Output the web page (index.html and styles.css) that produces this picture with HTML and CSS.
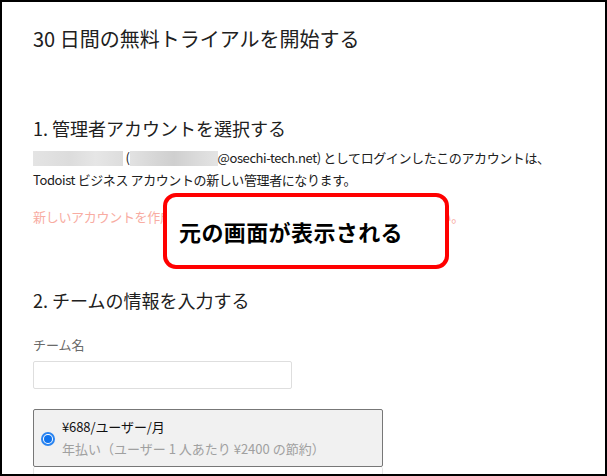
FILE: index.html
```html
<!DOCTYPE html>
<html lang="ja">
<head>
<meta charset="utf-8">
<title>30 日間の無料トライアルを開始する</title>
<link rel="stylesheet" href="styles.css">
</head>
<body>
<div class="frame">
  <div class="content">
    <h1 class="title">30 日間の無料トライアルを開始する</h1>

    <h2 class="section-title section-one">1. 管理者アカウントを選択する</h2>
    <p class="account-text">
      <span class="blur blur-name"></span> (<span class="blur blur-mail"></span>@osechi-tech.net) としてログインしたこのアカウントは、<br>
      Todoist ビジネス アカウントの新しい管理者になります。
    </p>
    <p class="notice">新しいアカウントを作成したい場合は、いったんログアウトしてください。</p>

    <h2 class="section-title section-two">2. チームの情報を入力する</h2>
    <label class="field-label" for="team">チーム名</label>
    <input class="text-input" id="team" type="text">

    <div class="plans">
      <label class="plan plan-selected">
        <span class="radio"><span class="radio-dot"></span></span>
        <span class="plan-text">
          <span class="plan-price">¥688/ユーザー/月</span>
          <span class="plan-note">年払い（ユーザー 1 人あたり ¥2400 の節約）</span>
        </span>
      </label>
      <div class="plan plan-next"></div>
    </div>
  </div>

  <div class="callout">元の画面が表示される</div>
</div>
</body>
</html>
```

FILE: styles.css
```css
html, body {
  margin: 0;
  padding: 0;
  background: #fff;
}

body {
  font-family: "Noto Sans CJK JP", "Noto Sans", sans-serif;
  color: #202020;
}

.frame {
  position: relative;
  width: 607px;
  height: 476px;
  box-sizing: border-box;
  border: 2px solid #000;
  overflow: hidden;
  background: #fff;
}

.content {
  padding: 24px 0 0 31px;
}

.title {
  margin: 0;
  font-size: 20px;
  line-height: 26px;
  font-weight: 400;
  letter-spacing: 0;
}

.section-title {
  margin: 0;
  font-size: 18px;
  line-height: 24px;
  font-weight: 400;
  letter-spacing: 0;
}

.section-one {
  margin-top: 64px;
}

.account-text {
  margin: 7px 0 0;
  font-size: 13px;
  line-height: 22px;
  letter-spacing: -0.4px;
}

.blur {
  display: inline-block;
  height: 15px;
  vertical-align: -3px;
  background: linear-gradient(90deg, #e4e4e4, #dcdcdc 40%, #e6e6e6 70%, #dddddd);
}

.blur-name {
  width: 90px;
}

.blur-mail {
  width: 88px;
  background: linear-gradient(90deg, #e2e2e2, #d6d6d6 30%, #cfcfcf 50%, #dadada 75%, #e4e4e4);
}

.notice {
  margin: 15px 0 0;
  font-size: 13px;
  line-height: 22px;
  color: #f8aca2;
  letter-spacing: -0.3px;
  white-space: nowrap;
}

.section-two {
  margin-top: 60px;
}

.field-label {
  display: block;
  margin-top: 23px;
  font-size: 13px;
  line-height: 20px;
  color: #6a6a6a;
}

.text-input {
  display: block;
  margin-top: 6px;
  width: 259px;
  height: 28px;
  box-sizing: border-box;
  border: 1px solid #dedede;
  border-radius: 2px;
  background: #fff;
  padding: 0 6px;
  font: inherit;
}

.plans {
  margin-top: 20px;
  width: 350px;
}

.plan {
  display: flex;
  align-items: center;
  box-sizing: border-box;
  border-radius: 2px;
}

.plan-selected {
  height: 58px;
  border: 1px solid #777;
  background: #f1f1f1;
  padding-left: 7px;
  gap: 7px;
}

.plan-next {
  height: 30px;
  border: 1px solid #e4e4e4;
  border-top: none;
}

.radio {
  width: 14px;
  height: 14px;
  box-sizing: border-box;
  border-radius: 50%;
  border: 2px solid #2a84f0;
  background: #fff;
  display: flex;
  align-items: center;
  justify-content: center;
  margin-top: 1px;
}

.radio-dot {
  width: 8px;
  height: 8px;
  border-radius: 50%;
  background: #0f73ee;
}

.plan-text {
  display: flex;
  flex-direction: column;
}

.plan-price {
  font-size: 13px;
  line-height: 22px;
  color: #111;
  letter-spacing: -0.1px;
}

.plan-note {
  font-size: 13px;
  line-height: 22px;
  color: #a0a0a0;
  letter-spacing: 0;
}

.callout {
  position: absolute;
  left: 161px;
  top: 191px;
  width: 286px;
  height: 76px;
  box-sizing: border-box;
  border: 4px solid #ff0000;
  border-radius: 13px;
  background: #fff;
  padding-left: 12px;
  display: flex;
  align-items: center;
  font-size: 22px;
  font-weight: 700;
  color: #000;
  letter-spacing: 0.4px;
}
```
